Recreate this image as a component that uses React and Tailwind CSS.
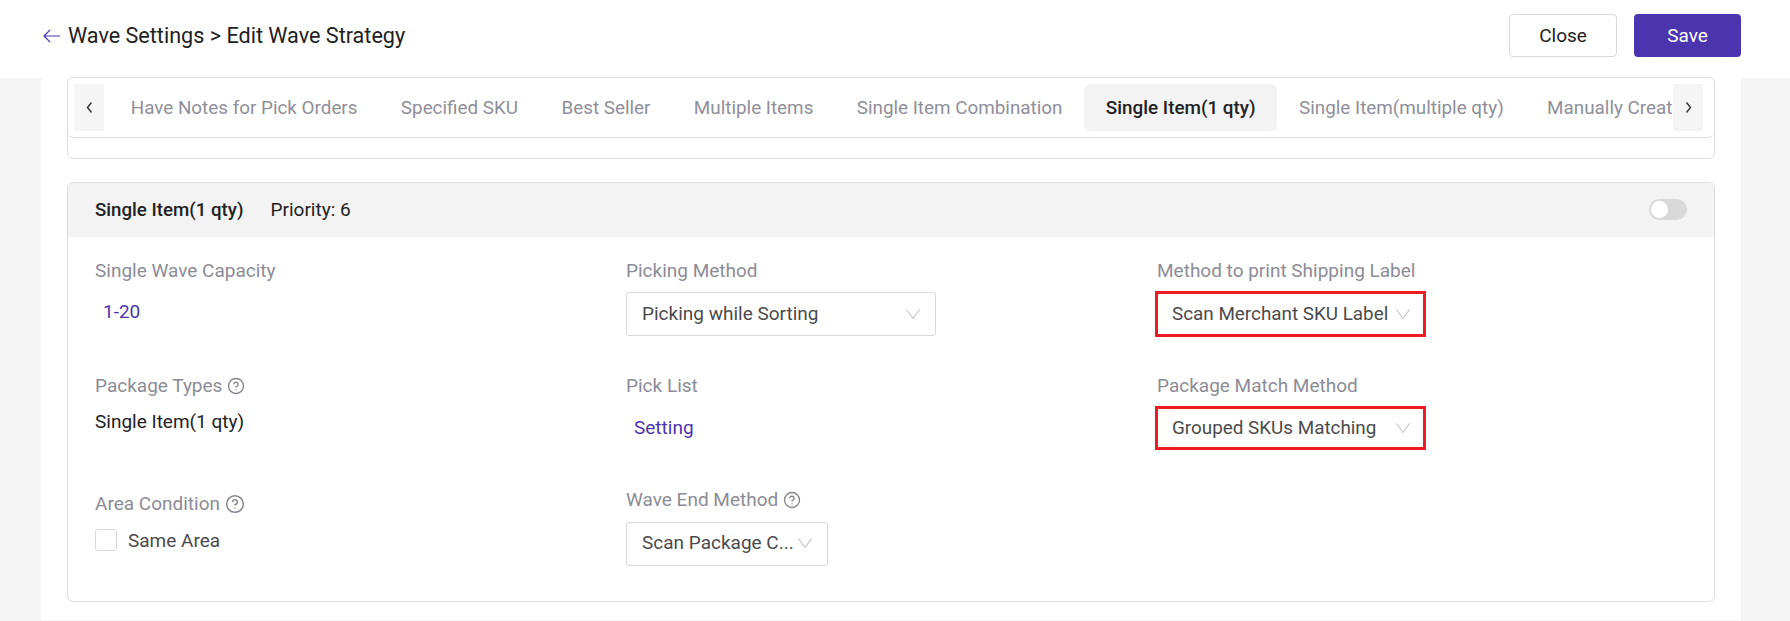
import React from 'react';
import { CircleHelp } from 'lucide-react';

const TABS = [
  'Have Notes for Pick Orders',
  'Specified SKU',
  'Best Seller',
  'Multiple Items',
  'Single Item Combination',
  'Single Item(1 qty)',
  'Single Item(multiple qty)',
  'Manually Created',
];

const Chevron = () => (
  <svg width="14" height="10" viewBox="0 0 14 10" fill="none" className="shrink-0">
    <path d="M0.5 0.5L7 9.5L13.5 0.5" stroke="#b4b4ba" strokeWidth="1" />
  </svg>
);

const Label = ({ children, help, helpSize = 18, gap = 'gap-[6px]' }) => (
  <div className={`flex items-center h-[26px] text-[#8c8c96] ${gap}`}>
    {children}
    {help && <CircleHelp size={helpSize} strokeWidth={1.8} className="text-[#85858f]" />}
  </div>
);

const Select = ({ value, className }) => (
  <div className={`flex items-center justify-between rounded-[3px] border border-[#d9d9d9] h-[44px] pl-[15px] pr-[15px] text-[#4b4b4b] ${className}`}>
    <span>{value}</span>
    <Chevron />
  </div>
);

const Marked = ({ value, className }) => (
  <div className={`flex items-center justify-between border-[3px] border-[#ed1c24] w-[271px] -ml-[2px] pl-[14px] pr-[13px] text-[18.85px] text-[#4b4b4b] ${className}`}>
    <span>{value}</span>
    <Chevron />
  </div>
);

export default function App() {
  return (
    <div className="min-h-[621px] bg-[#f5f5f5] text-[19px] leading-[26px] text-[#222] font-['Roboto',sans-serif]">
      <header className="h-[78px] bg-white flex justify-between pl-[43px] pr-[49px] pt-[14px]">
        <div className="flex items-center h-[43px] gap-[8px] text-[21.6px]">
          <svg width="17" height="14" viewBox="0 0 17 14" fill="none">
            <path d="M7 1L1 7L7 13M1 7H17" stroke="#4a35ae" strokeWidth="1.2" />
          </svg>
          <span>Wave Settings &gt; Edit Wave Strategy</span>
        </div>
        <div className="flex gap-[17px]">
          <button className="w-[108px] h-[43px] rounded-[4px] border border-[#d9d9d9] bg-white text-[#222]">Close</button>
          <button className="w-[107px] h-[43px] rounded-[4px] bg-[#4a35ae] text-white">Save</button>
        </div>
      </header>

      <main className="ml-[41px] mr-[49px] bg-white pl-[26px] pr-[26px] h-[543px]">
        <section className="h-[82px] -mt-px rounded-[6px] border border-[#dedede]">
          <div className="h-[60px] rounded-[6px] border-b border-[#dedede] flex items-center pl-[6px] pr-[11px] text-[18.85px]">
            <button className="w-[30px] h-[47px] shrink-0 bg-[#f5f5f5] flex items-center justify-center">
              <svg width="7" height="11" viewBox="0 0 7 11" fill="none">
                <path d="M5.5 0.5L1.5 5.5L5.5 10.5" stroke="#333" strokeWidth="1.4" />
              </svg>
            </button>
            <div className="flex-1 min-w-0 ml-[5px] flex overflow-hidden">
              {TABS.map((t) => (
                <div
                  key={t}
                  className={
                    t === 'Single Item(1 qty)'
                      ? 'shrink-0 h-[47px] px-[21.7px] flex items-center rounded-[6px] bg-[#f3f3f3] font-medium text-[#222] whitespace-nowrap'
                      : 'shrink-0 h-[47px] px-[21.7px] flex items-center text-[#8f8f99] whitespace-nowrap'
                  }
                >
                  {t}
                </div>
              ))}
            </div>
            <button className="w-[30px] h-[47px] shrink-0 bg-[#f5f5f5] flex items-center justify-center">
              <svg width="7" height="11" viewBox="0 0 7 11" fill="none">
                <path d="M1.5 0.5L5.5 5.5L1.5 10.5" stroke="#333" strokeWidth="1.4" />
              </svg>
            </button>
          </div>
        </section>

        <section className="mt-[23px] h-[420px] rounded-[6px] border border-[#dedede]">
          <div className="h-[54px] pb-px rounded-t-[6px] bg-[#f3f3f3] flex items-center justify-between pl-[27px] pr-[27px]">
            <div className="flex items-center gap-[27px]">
              <span className="font-medium text-[18.7px]">Single Item(1 qty)</span>
              <span>Priority: 6</span>
            </div>
            <div className="w-[38px] h-[21px] rounded-full bg-[#d9d9d9] p-[2px]">
              <div className="w-[17px] h-[17px] rounded-full bg-white" />
            </div>
          </div>

          <div className="grid grid-cols-[531px_531px_1fr] grid-rows-[115px_113px_1fr] pl-[27px] pt-[21px]">
            <div>
              <Label>Single Wave Capacity</Label>
              <div className="mt-[15px] ml-[8px] text-[#4a35ae]">1-20</div>
            </div>
            <div>
              <Label>Picking Method</Label>
              <Select value="Picking while Sorting" className="mt-[8px] w-[310px]" />
            </div>
            <div>
              <Label>Method to print Shipping Label</Label>
              <Marked value="Scan Merchant SKU Label" className="mt-[7px] h-[46px]" />
            </div>

            <div>
              <Label help gap="gap-[5px]">Package Types</Label>
              <div className="mt-[10px]">Single Item(1 qty)</div>
            </div>
            <div>
              <Label>Pick List</Label>
              <div className="mt-[16px] ml-[8px] text-[#4a35ae]">Setting</div>
            </div>
            <div>
              <Label>Package Match Method</Label>
              <Marked value="Grouped SKUs Matching" className="mt-[7px] h-[44px]" />
            </div>

            <div className="pt-[5px]">
              <Label help helpSize={20} gap="gap-[5px]">Area Condition</Label>
              <label className="mt-[10px] flex items-center gap-[11px] text-[#4b4b4b]">
                <span className="w-[22px] h-[22px] rounded-[3px] border border-[#d9d9d9]" />
                <span className="relative top-px">Same Area</span>
              </label>
            </div>
            <div className="pt-px">
              <Label help gap="gap-[5px]">Wave End Method</Label>
              <Select value="Scan Package C..." className="mt-[9px] w-[202px] pr-[14px] pb-[2px]" />
            </div>
          </div>
        </section>
      </main>
    </div>
  );
}
